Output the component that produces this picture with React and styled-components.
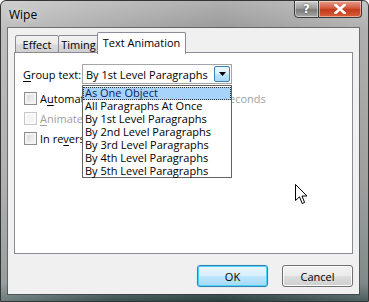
import React from 'react';
import styled, { createGlobalStyle, css } from 'styled-components';

const Global = createGlobalStyle`
  * { box-sizing: border-box; }
  html, body { margin: 0; padding: 0; background: #fff; }
  body { font-family: "Open Sans", "Noto Sans", sans-serif; font-size: 11px; color: #000; }
`;

const Window = styled.div`
  position: relative;
  width: 369px;
  height: 302px;
  display: flex;
  flex-direction: column;
  padding: 0 9px 7px 7px;
  border: 1px solid #353535;
  border-radius: 6px 6px 0 0;
  background:
    linear-gradient(90deg, rgba(255,255,255,0.3) 0%, rgba(255,255,255,0.08) 30%, rgba(0,0,0,0.06) 60%, rgba(255,255,255,0.15) 100%),
    linear-gradient(180deg, #bababa 0%, #a2a2a2 10%, #8e9090 60%, #6c7676 94%, #2c4444 100%);
  overflow: hidden;
`;

const TitleBar = styled.div`
  height: 27px;
  flex: none;
  display: flex;
  align-items: flex-start;
`;

const Title = styled.div`
  font-family: "Open Sans", sans-serif;
  font-size: 12px;
  padding: 5px 0 0 1px;
  color: #000;
  text-shadow: 0 0 6px rgba(255,255,255,0.8);
`;

const Caption = styled.div`
  margin-left: auto;
  margin-right: -3px;
  display: flex;
  margin-top: -1px;
`;

const CapButton = styled.div`
  height: 18px;
  width: ${(p) => p.w}px;
  display: flex;
  align-items: center;
  justify-content: center;
  border: 1px solid #3b3b3b;
  color: #fff;
  font-family: "DejaVu Sans", sans-serif;
  font-weight: bold;
  font-size: 12px;
  text-shadow: 0 0 2px #333;
  box-shadow: inset 0 0 0 1px rgba(255,255,255,0.45);
  ${(p) =>
    p.close
      ? css`
          border-radius: 0 0 4px 0;
          border-left: none;
          background: linear-gradient(180deg, #e7a08c 0%, #d2583c 45%, #c23a1b 55%, #d9603a 100%);
        `
      : css`
          border-radius: 0 0 0 4px;
          background: linear-gradient(180deg, #cfcfcf 0%, #9c9c9c 45%, #7b7b7b 55%, #a8a8a8 100%);
        `}
`;

const Client = styled.div`
  flex: 1;
  display: flex;
  flex-direction: column;
  background: #f0f0f0;
  padding: 4px 6px 0 6px;
  box-shadow: 0 0 0 1px rgba(40,40,40,0.5);
`;

const TabStrip = styled.div`
  display: flex;
  align-items: flex-end;
  height: 21px;
  padding-left: 1px;
  position: relative;
  z-index: 2;
`;

const Tab = styled.div`
  height: ${(p) => (p.active ? 22 : 18)}px;
  width: ${(p) => p.w}px;
  margin-left: ${(p) => p.ml}px;
  margin-bottom: ${(p) => (p.active ? -1 : 0)}px;
  display: flex;
  align-items: center;
  justify-content: center;
  padding-bottom: ${(p) => (p.active ? 3 : 0)}px;
  border: 1px solid #898c95;
  border-bottom: ${(p) => (p.active ? 'none' : '1px solid #898c95')};
  border-radius: 2px 2px 0 0;
  background: ${(p) =>
    p.active ? '#fff' : 'linear-gradient(180deg, #f2f2f2 0%, #ebebeb 50%, #dddddd 51%, #cfcfcf 100%)'};
  position: relative;
  z-index: ${(p) => (p.active ? 2 : 1)};
`;

const Panel = styled.div`
  position: relative;
  height: 202px;
  background: #fff;
  border: 1px solid #898c95;
  margin-top: -1px;
  padding: 11px 8px 0 8px;
  display: flex;
  flex-direction: column;
`;

const GroupRow = styled.div`
  display: flex;
  align-items: center;
  height: 20px;
`;

const Label = styled.div`
  width: 59px;
  color: ${(p) => (p.disabled ? '#a0a0a0' : '#000')};
`;

const Combo = styled.div`
  width: 150px;
  height: 20px;
  border: 1px solid #a6a6a6;
  display: flex;
  align-items: center;
  padding-left: 3px;
  background: #fff;
`;

const ComboButton = styled.div`
  margin-left: auto;
  margin-right: 1px;
  width: 16px;
  height: 16px;
  border: 1px solid #3c7fb1;
  border-radius: 2px;
  background: linear-gradient(180deg, #eaf6fd 0%, #d9f0fc 50%, #bee6fd 51%, #a7d9f5 100%);
  display: flex;
  align-items: center;
  justify-content: center;
`;

const Checks = styled.div`
  display: flex;
  flex-direction: column;
  gap: 7px;
  margin-top: 8px;
`;

const CheckRow = styled.div`
  display: flex;
  align-items: center;
  height: 13px;
  color: ${(p) => (p.disabled ? '#a0a0a0' : '#000')};
`;

const Box = styled.span`
  width: 13px;
  height: 13px;
  margin: 0 3px 0 1px;
  flex: none;
  border: 1px solid ${(p) => (p.disabled ? '#c8c8c8' : '#8e8f8f')};
  background: ${(p) =>
    p.disabled ? '#f4f4f4' : 'linear-gradient(135deg, #d0d0d0 0%, #e8e8e8 50%, #f6f6f6 100%)'};
  box-shadow: inset 0 0 0 2px ${(p) => (p.disabled ? '#fafafa' : '#f4f4f4')};
`;

const Spinner = styled.span`
  width: ${(p) => p.w}px;
  height: 13px;
  margin-right: 4px;
`;

const Seconds = styled.span`
  color: #a0a0a0;
`;

const DropList = styled.div`
  position: absolute;
  left: 67px;
  top: 32px;
  width: 150px;
  height: 93px;
  background: #fff;
  border: 1px solid #646464;
  padding-top: 1px;
  z-index: 5;
`;

const Item = styled.div`
  height: 13px;
  line-height: 12px;
  padding: 0 2px;
  white-space: nowrap;
  ${(p) =>
    p.selected &&
    css`
      background: #a7d2fa;
      outline: 1px dotted #333;
      outline-offset: -1px;
      color: #0a1c5a;
    `}
`;

const Buttons = styled.div`
  display: flex;
  justify-content: flex-end;
  gap: 14px;
  padding-top: 11px;
`;

const Button = styled.div`
  width: 71px;
  height: 22px;
  display: flex;
  align-items: center;
  justify-content: center;
  border-radius: 3px;
  font-size: 11px;
  ${(p) =>
    p.primary
      ? css`
          border: 1px solid #3c7fb1;
          background: linear-gradient(180deg, #e9f6fd 0%, #d7effc 50%, #bde6fd 51%, #a6d9f4 100%);
          box-shadow: inset 0 0 0 1px #48d4f8, 0 0 1px #48d4f8;
        `
      : css`
          border: 1px solid #707070;
          background: linear-gradient(180deg, #f2f2f2 0%, #ebebeb 50%, #dddddd 51%, #cfcfcf 100%);
          box-shadow: inset 0 0 0 1px #fcfcfc;
        `}
`;

const Cursor = styled.svg`
  position: absolute;
  left: 280px;
  top: 131px;
  z-index: 6;
`;

const U = styled.u`
  text-decoration-thickness: 1px;
  text-underline-offset: 2px;
`;

const items = [
  'As One Object',
  'All Paragraphs At Once',
  'By 1st Level Paragraphs',
  'By 2nd Level Paragraphs',
  'By 3rd Level Paragraphs',
  'By 4th Level Paragraphs',
  'By 5th Level Paragraphs',
];

export default function App() {
  return (
    <>
      <Global />
      <Window>
        <TitleBar>
          <Title>Wipe</Title>
          <Caption>
            <CapButton w={25}>?</CapButton>
            <CapButton w={43} close>
              <svg width="12" height="10" viewBox="0 0 12 10">
                <path d="M1.5 1 L10.5 9 M10.5 1 L1.5 9" stroke="#fff" strokeWidth="2.6" strokeLinecap="square" />
              </svg>
            </CapButton>
          </Caption>
        </TitleBar>
        <Client>
          <TabStrip>
            <Tab w={44} ml={0}>Effect</Tab>
            <Tab w={41} ml={-1}>Timing</Tab>
            <Tab w={89} ml={-2} active>Text Animation</Tab>
          </TabStrip>
          <Panel>
            <GroupRow>
              <Label>
                <U>G</U>roup text:
              </Label>
              <Combo>
                By 1st Level Paragraphs
                <ComboButton>
                  <svg width="7" height="4" viewBox="0 0 7 4">
                    <path d="M0 0 H7 L3.5 4 Z" fill="#000" />
                  </svg>
                </ComboButton>
              </Combo>
            </GroupRow>
            <Checks>
              <CheckRow>
                <Box />
                A<U>u</U>tomatically, after
                <Spinner w={80} />
                <Seconds>seconds</Seconds>
              </CheckRow>
              <CheckRow disabled>
                <Box disabled />
                <U>A</U>nimate attached shape
              </CheckRow>
              <CheckRow>
                <Box />
                In re<U>v</U>erse order
              </CheckRow>
            </Checks>
            <DropList>
              {items.map((t, i) => (
                <Item key={t} selected={i === 0}>
                  {t}
                </Item>
              ))}
            </DropList>
            <Cursor width="13" height="21" viewBox="0 0 13 21">
              <path d="M0.5 0.5 V16.5 L4.5 12.8 L7.2 19.5 L9.6 18.5 L7 12 H12 Z" fill="#fff" stroke="#000" strokeWidth="1" strokeLinejoin="miter" />
            </Cursor>
          </Panel>
          <Buttons>
            <Button primary>OK</Button>
            <Button>Cancel</Button>
          </Buttons>
        </Client>
      </Window>
    </>
  );
}
